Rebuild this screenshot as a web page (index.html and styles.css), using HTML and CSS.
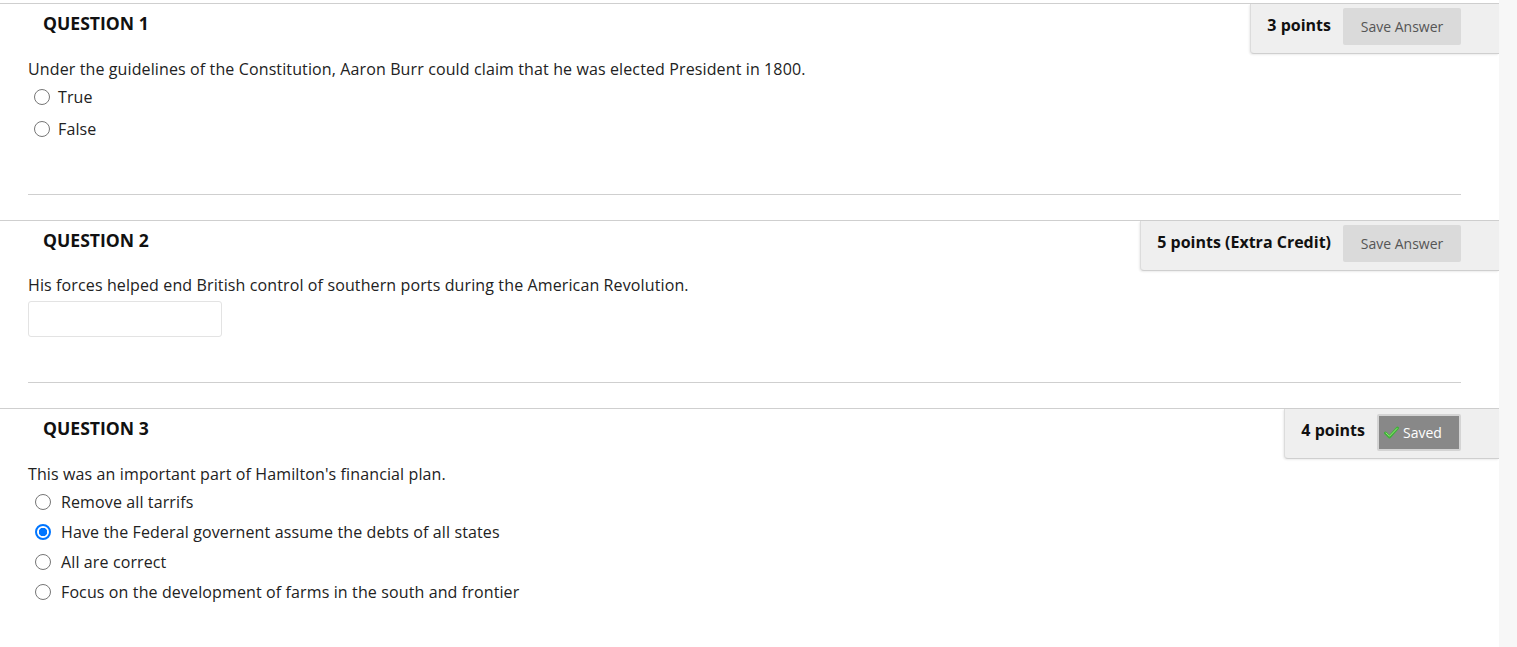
FILE: index.html
```html
<!DOCTYPE html>
<html>
<head>
<meta charset="utf-8">
<link rel="stylesheet" href="styles.css">
</head>
<body>
<main class="page">
  <section class="question q1">
    <div class="q-header">
      <h3 class="q-title">QUESTION 1</h3>
      <div class="q-points">
        <span class="points">3 points</span>
        <button class="btn-save">Save Answer</button>
      </div>
    </div>
    <div class="q-body">
      <p class="q-text">Under the guidelines of the Constitution, Aaron Burr could claim that he was elected President in 1800.</p>
      <ul class="options opts-tf">
        <li><span class="radio"></span><span>True</span></li>
        <li><span class="radio"></span><span>False</span></li>
      </ul>
      <hr class="sep sep1">
    </div>
  </section>

  <section class="question q2">
    <div class="q-header">
      <h3 class="q-title">QUESTION 2</h3>
      <div class="q-points">
        <span class="points">5 points (Extra Credit)</span>
        <button class="btn-save">Save Answer</button>
      </div>
    </div>
    <div class="q-body">
      <p class="q-text q-text-tight">His forces helped end British control of southern ports during the American Revolution.</p>
      <div class="fill-input"></div>
      <hr class="sep sep2">
    </div>
  </section>

  <section class="question q3">
    <div class="q-header">
      <h3 class="q-title">QUESTION 3</h3>
      <div class="q-points">
        <span class="points">4 points</span>
        <button class="btn-saved"><svg class="check" width="15" height="13" viewBox="0 0 15 13"><path d="M1.5 7 L5.5 11 L13.5 2" fill="none" stroke="#3fb23a" stroke-width="3" stroke-linecap="round" stroke-linejoin="round"/><path d="M2 7 L5.5 10.2 L13 2.5" fill="none" stroke="#9be878" stroke-width="1" stroke-linecap="round"/></svg>Saved</button>
      </div>
    </div>
    <div class="q-body">
      <p class="q-text">This was an important part of Hamilton's financial plan.</p>
      <ul class="options opts-mc">
        <li><span class="radio"></span><span>Remove all tarrifs</span></li>
        <li><span class="radio checked"></span><span>Have the Federal governent assume the debts of all states</span></li>
        <li><span class="radio"></span><span>All are correct</span></li>
        <li><span class="radio"></span><span>Focus on the development of farms in the south and frontier</span></li>
      </ul>
    </div>
  </section>
</main>
</body>
</html>
```

FILE: styles.css
```css
html, body {
  margin: 0;
  padding: 0;
}
body {
  background: #f7f7f7;
  font-family: "Open Sans", "Noto Sans", sans-serif;
  color: #222;
  height: 647px;
  overflow: hidden;
}
.page {
  width: 1499px;
  background: #fff;
  height: 647px;
  padding-top: 3px;
  box-sizing: border-box;
}
.question {
  border-top: 1px solid #cfcfcf;
}
.q-header {
  display: flex;
  justify-content: space-between;
  align-items: flex-start;
  height: 50px;
}
.q-title {
  margin: 0;
  padding: 7px 0 0 43px;
  font-size: 17.6px;
  line-height: 24px;
  font-weight: 700;
  color: #111;
}
.q-points {
  display: flex;
  gap: 12px;
  height: 50px;
  box-sizing: border-box;
  padding: 4px 38px 0 16px;
  align-items: flex-start;
  background: #efefef;
  border-left: 1px solid #dcdcdc;
  border-bottom: 1px solid #cfcfcf;
  border-bottom-left-radius: 4px;
  box-shadow: -1px 1px 2px rgba(0,0,0,0.08);
}
.points {
  font-size: 16px;
  font-weight: 700;
  color: #111;
  line-height: 22px;
  padding-top: 6px;
}
.btn-save {
  width: 118px;
  height: 37px;
  border: none;
  border-radius: 2px;
  background: #dadada;
  color: #555;
  font-family: "Open Sans", "Noto Sans", sans-serif;
  font-size: 14px;
  padding: 0;
  margin-top: 0;
}
.btn-saved {
  width: 84px;
  height: 37px;
  box-sizing: border-box;
  border: 2px solid #d4d4d4;
  border-radius: 2px;
  background: #888;
  color: #fff;
  font-family: "Open Sans", "Noto Sans", sans-serif;
  font-size: 14px;
  padding: 0 0 0 5px;
  margin-top: 1px;
  display: flex;
  align-items: center;
  justify-content: flex-start;
  gap: 4px;
}
.check {
  display: block;
}
.q-body {
  padding: 0 38px 0 28px;
}
.q-text {
  margin: 4px 0 0;
  font-size: 16px;
  line-height: 22px;
  letter-spacing: 0.12px;
}
.q-text-tight {
  margin-top: 3px;
}
.options {
  list-style: none;
  margin: 0;
  padding: 0;
}
.options li {
  display: flex;
  align-items: center;
  font-size: 16px;
  letter-spacing: 0.12px;
}
.opts-tf {
  margin-top: 1px;
}
.opts-tf li {
  height: 32px;
  padding-left: 6px;
  gap: 8px;
}
.opts-mc {
  margin-top: 2px;
}
.opts-mc li {
  height: 30px;
  padding-left: 7px;
  gap: 10px;
}
.radio {
  width: 16px;
  height: 16px;
  box-sizing: border-box;
  border: 1px solid #767676;
  border-radius: 50%;
  background: #fff;
  flex: none;
}
.radio.checked {
  border: 2px solid #0075ff;
  background: radial-gradient(circle, #0075ff 0 4px, #fff 4.5px);
}
.sep {
  border: none;
  border-top: 1px solid #cfcfcf;
  margin: 0;
}
.sep1 {
  margin-top: 49px;
  margin-bottom: 25px;
}
.fill-input {
  width: 194px;
  height: 36px;
  box-sizing: border-box;
  border: 1px solid #e3e3e3;
  border-radius: 3px;
  margin-top: 5px;
}
.sep2 {
  margin-top: 45px;
  margin-bottom: 25px;
}
```
